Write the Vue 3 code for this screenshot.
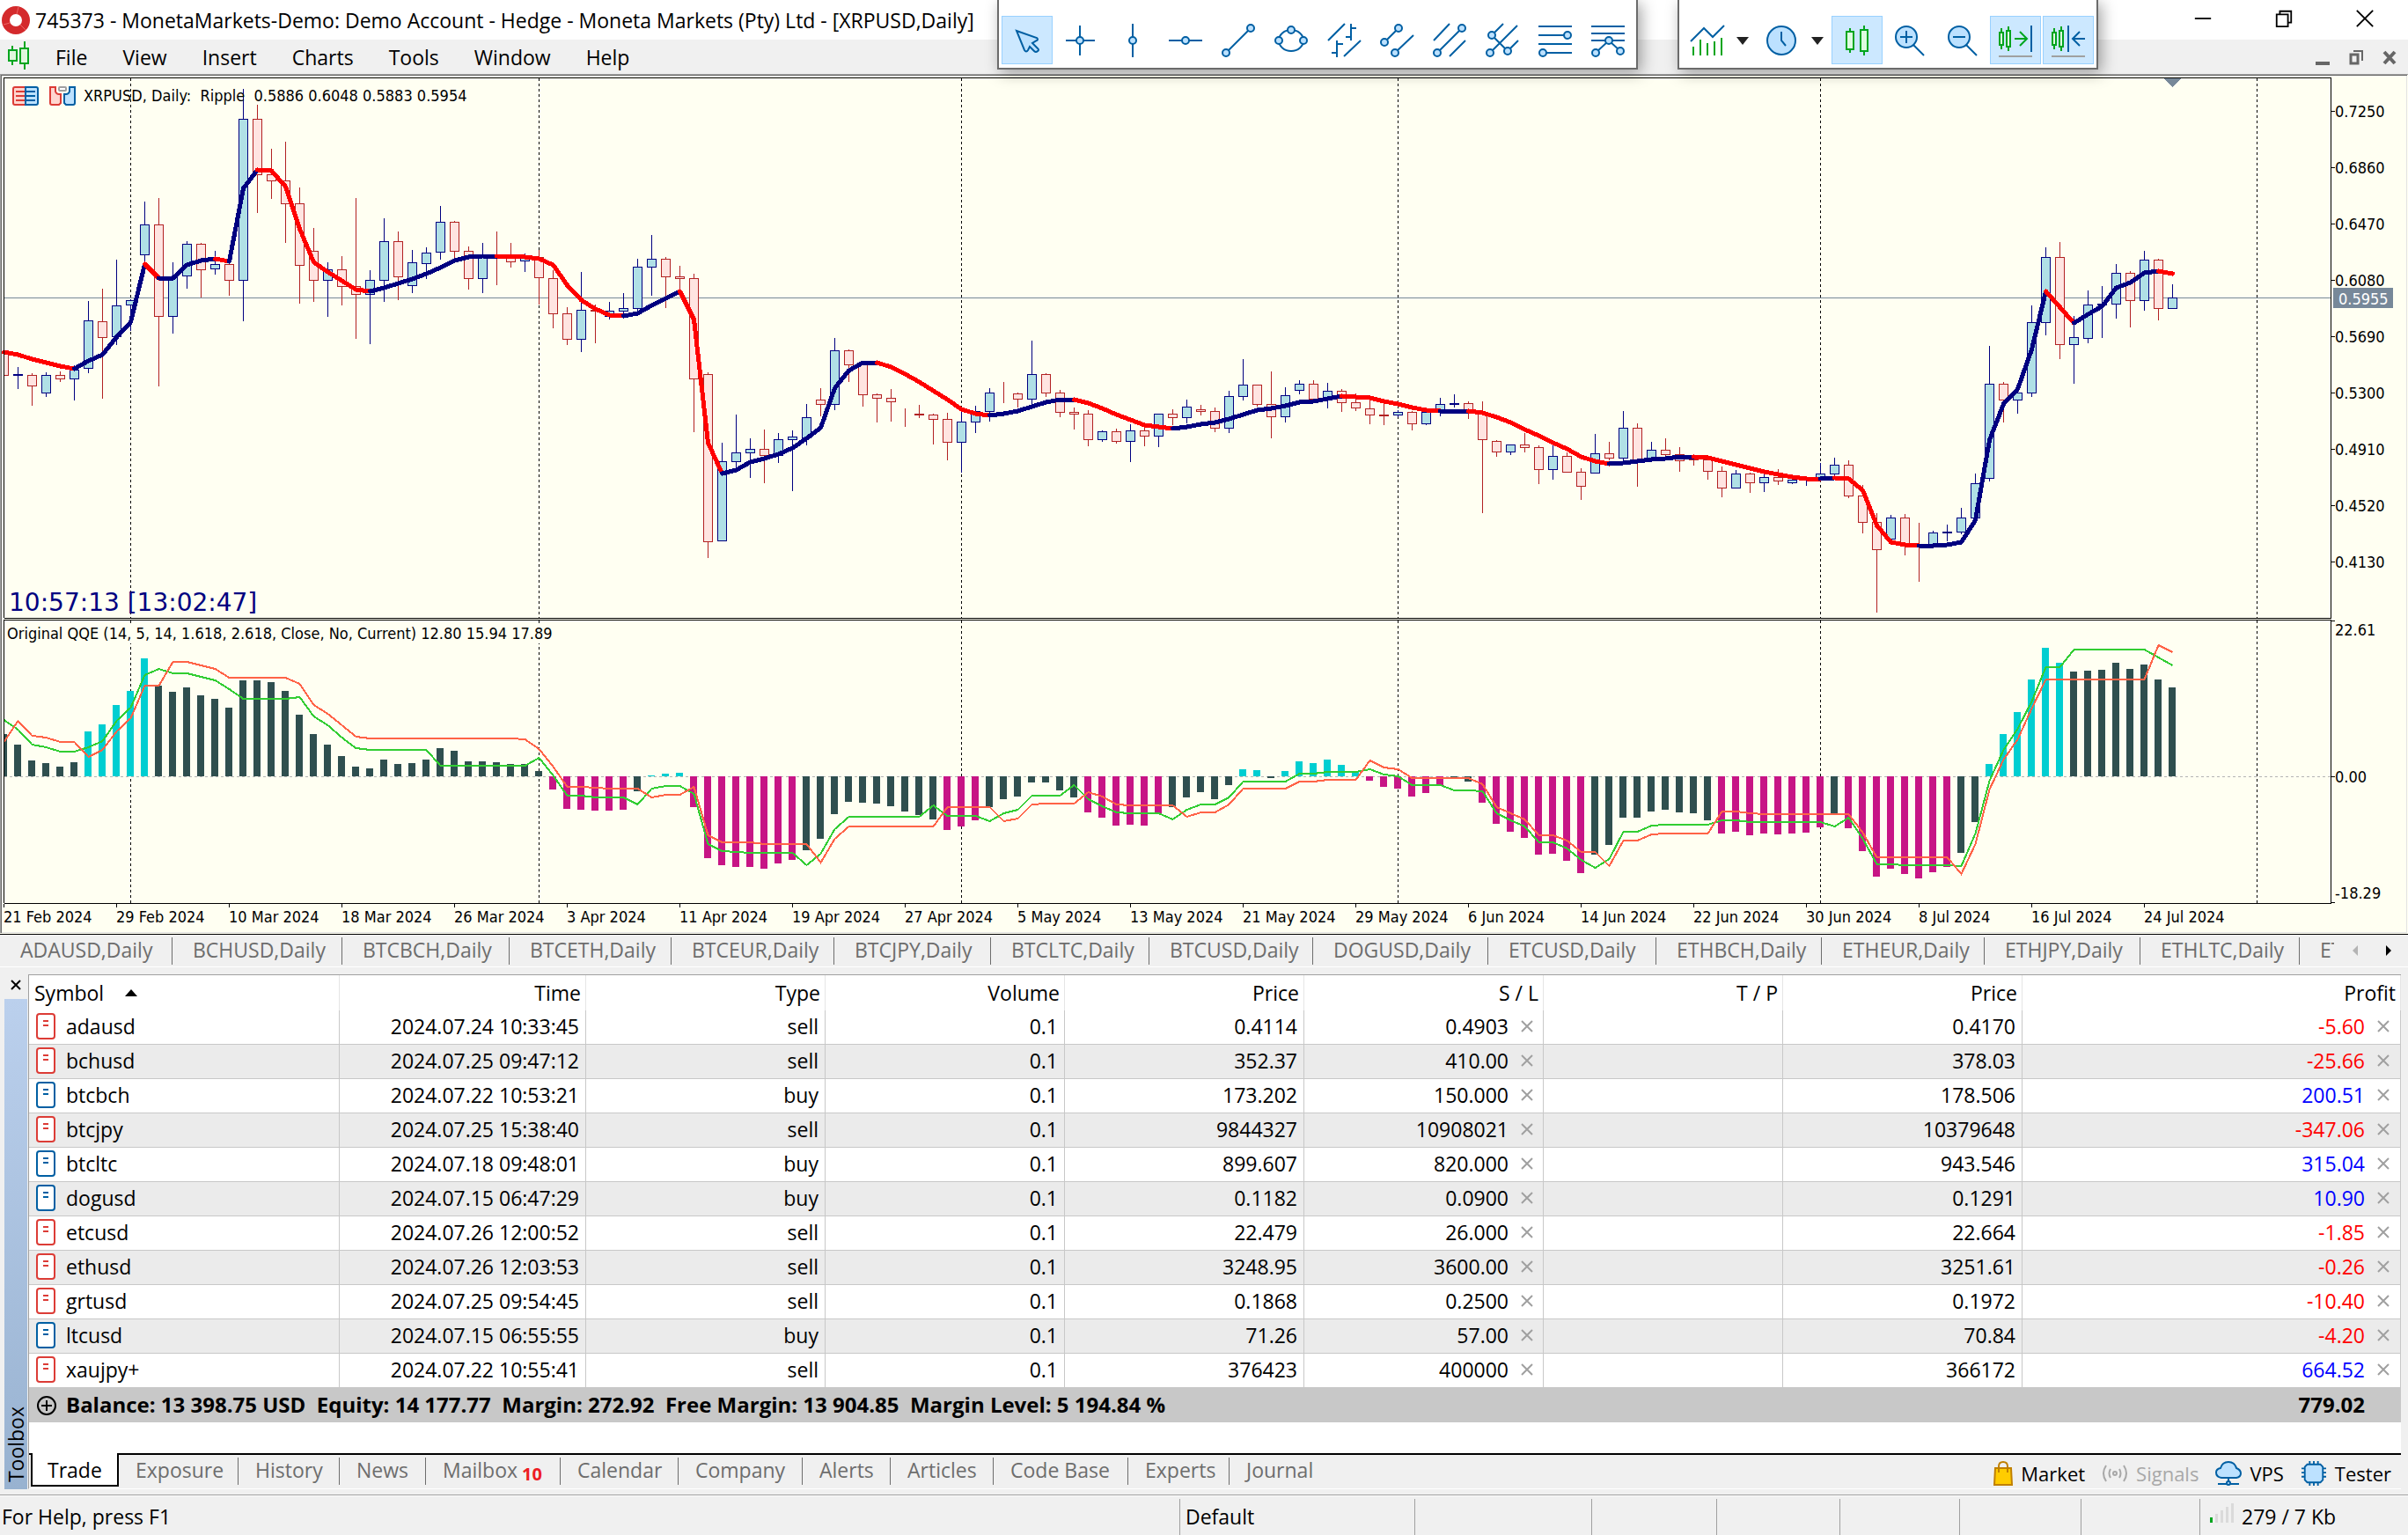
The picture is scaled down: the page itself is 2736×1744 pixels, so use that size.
<script setup>
const x = (i) => 4.5 + 16 * i

// up flag, high, body top, body bottom, low
const candles = `
0 401 401 426 427|1 417 425 426 442|0 424 426 438 461|1 423 426 446 451|0 422 426 430 434|1 415 420 430 455|1 342 364 418 424|0 328 365 383 453|1 295 347 382 392|1 340 341 346 376
1 229 255 289 300|0 225 255 359 439|1 298 315 359 379|1 274 277 313 328|0 276 277 306 338|1 285 300 305 312|0 299 300 318 336|1 101 135 318 365|0 119 135 198 242|0 169 198 205 226
0 161 205 231 276|0 213 231 301 345|0 259 285 318 343|1 298 306 318 360|0 291 306 325 347|0 225 325 334 385|1 307 318 334 391|1 248 274 318 343|0 263 274 314 341|1 284 298 324 333
1 281 287 299 317|1 234 252 286 295|0 251 252 285 293|0 280 285 316 329|1 276 291 316 333|0 263 292 293 324|0 276 292 297 304|1 288 292 296 309|0 284 292 315 346|0 307 316 356 373
0 349 356 385 392|1 309 352 385 400|0 346 352 353 390|1 343 353 359 363|1 333 350 353 356|1 294 303 350 356|1 267 294 303 336|0 292 294 314 350|0 302 314 316 330|0 311 316 430 491
0 423 425 615 634|1 503 524 614 615|1 471 514 524 536|1 498 510 514 543|0 488 510 517 549|1 492 499 517 526|1 489 496 499 558|1 459 474 497 506|0 441 454 459 473|1 384 398 459 466
0 397 398 414 434|0 413 414 448 462|0 447 448 452 480|0 442 452 456 479|0 464 470 470 485|0 460 470 471 475|0 470 471 476 505|0 469 476 502 523|1 463 479 502 537|1 461 467 479 492
1 441 446 467 479|0 434 447 447 458|0 446 447 453 463|1 387 425 453 464|0 424 425 446 451|0 443 446 468 474|0 463 468 470 488|0 466 470 499 507|1 489 490 499 502|0 487 490 501 504
1 482 489 501 525|0 486 489 495 507|1 470 470 495 508|0 465 470 474 483|1 454 462 474 481|0 460 465 467 472|0 463 467 486 491|1 444 450 486 492|1 408 437 450 455|0 437 437 459 462
0 422 459 473 498|1 440 449 473 480|1 432 436 443 448|0 432 436 453 454|1 435 444 452 464|0 442 444 457 468|0 447 457 463 467|0 455 464 471 482|0 458 471 472 483|1 466 468 471 474
0 467 468 481 489|1 467 468 481 483|1 452 459 467 473|1 448 458 459 463|0 456 458 467 476|0 456 470 499 583|0 500 501 513 519|1 505 505 513 517|0 492 505 508 514|0 506 508 533 550
1 506 518 533 545|0 514 518 536 537|0 532 536 552 568|1 493 515 537 538|0 502 515 520 523|1 467 486 520 524|0 481 486 523 553|1 502 511 520 522|0 498 511 516 519|0 508 516 523 536
0 519 520 522 529|0 521 522 535 545|0 530 535 554 565|1 534 538 554 555|0 537 538 548 560|1 539 542 548 559|0 533 542 546 551|1 544 545 548 550|1 543 544 545 552|1 526 538 544 545
1 520 528 538 541|0 523 528 563 566|0 551 563 593 606|0 583 593 624 696|1 585 588 612 616|0 584 588 618 631|0 594 618 619 661|1 603 605 619 620|1 596 604 605 615|1 577 588 604 607
1 538 549 588 590|1 393 436 543 547|0 434 436 454 480|1 445 446 454 470|1 347 366 446 451|1 281 292 366 381|0 275 292 391 408|1 359 383 391 436|1 330 346 384 390|1 325 345 346 384
1 300 310 345 362|0 308 310 341 372|1 285 295 341 353|0 294 295 350 364|1 323 338 350 351`
  .trim()
  .split(/[|\n]/)
  .map((row, i) => {
    const [up, high, top, bottom, low] = row.split(' ').map(Number)
    return { x: x(i), up: up === 1, high, top, bottom, low }
  })

const average = [
  400, 403, 408, 412, 416, 419, 410, 403, 383, 366, 300, 316, 316, 301, 296, 294, 297, 214, 193, 194,
  212, 260, 298, 309, 319, 329, 331, 327, 322, 317, 311, 304, 296, 292, 291, 291, 291, 292, 294, 301,
  324, 341, 351, 358, 359, 356, 347, 339, 331, 363, 503, 538, 534, 525, 521, 516, 509, 498, 486, 441,
  421, 412, 412, 417, 425, 434, 444, 454, 465, 470, 472, 470, 467, 462, 457, 454, 454, 458, 464, 471,
  477, 483, 485, 487, 485, 482, 480, 476, 471, 466, 464, 461, 457, 456, 453, 450, 451, 452, 456, 459,
  463, 466, 467, 467, 467, 469, 474, 480, 488, 495, 503, 510, 519, 524, 527, 526, 524, 522, 521, 519,
  519, 520, 524, 528, 532, 536, 539, 542, 544, 544, 543, 544, 557, 597, 616, 619, 620, 620, 619, 616,
  591, 500, 459, 442, 397, 331, 349, 367, 357, 348, 327, 321, 310, 308, 311,
]

const within = (i, ranges) => ranges.some(([a, b]) => i >= a && i <= b)
const rising = [[6, 10], [12, 15], [17, 18], [27, 35], [45, 48], [52, 62], [71, 76], [84, 95], [103, 104], [115, 120], [130, 130], [137, 145], [148, 153]]

const averageRuns = []
for (let i = 1; i < average.length; i++) {
  const up = within(i, rising)
  let run = averageRuns[averageRuns.length - 1]
  if (!run || run.up !== up) {
    run = { up, points: [`${x(i - 1)},${average[i - 1]}`] }
    averageRuns.push(run)
  }
  run.points.push(`${x(i)},${average[i]}`)
}

const strong = [[6, 10], [46, 48], [88, 89], [91, 96], [141, 146]]
const weak = [[39, 44], [49, 56], [67, 69], [77, 82], [97, 102], [105, 112], [122, 129], [131, 138]]
const zero = 882
const bars = [
  834, 846, 864, 867, 871, 866, 831, 823, 801, 785, 748, 779, 786, 781, 790, 794, 804, 773, 773, 775,
  785, 812, 834, 846, 859, 871, 873, 863, 868, 867, 863, 850, 853, 865, 865, 866, 868, 868, 876, 897,
  919, 920, 921, 921, 920, 899, 881, 879, 878, 917, 975, 983, 985, 985, 987, 981, 977, 966, 953, 925,
  911, 912, 913, 916, 922, 926, 931, 943, 939, 932, 917, 908, 905, 889, 889, 898, 906, 923, 929, 938,
  937, 938, 924, 917, 906, 900, 908, 892, 874, 875, 884, 876, 865, 867, 863, 869, 877, 887, 894, 896,
  905, 901, 892, 883, 888, 912, 936, 945, 952, 971, 970, 978, 992, 971, 960, 929, 929, 922, 920, 923,
  924, 932, 947, 945, 949, 947, 948, 947, 946, 940, 924, 941, 967, 996, 987, 993, 998, 991, 985, 969,
  934, 868, 834, 809, 772, 736, 753, 763, 762, 761, 753, 760, 755, 772, 781,
].map((y, i) => ({
  x: x(i),
  y: Math.min(y, zero),
  height: Math.abs(y - zero),
  tone: within(i, strong) ? 'strong' : within(i, weak) ? 'weak' : 'neutral',
}))

const fast = [
  818, 829, 846, 849, 854, 854, 849, 842, 819, 804, 767, 760, 765, 765, 769, 773, 783, 794, 794, 794,
  794, 792, 814, 824, 838, 850, 852, 852, 852, 852, 852, 870, 870, 870, 870, 870, 870, 870, 861, 881,
  904, 904, 906, 906, 906, 914, 896, 893, 893, 902, 959, 967, 968, 969, 969, 969, 969, 983, 970, 942,
  928, 928, 928, 928, 928, 928, 915, 927, 927, 927, 933, 924, 920, 904, 904, 904, 892, 908, 916, 923,
  924, 924, 924, 931, 920, 914, 914, 906, 888, 888, 888, 888, 879, 879, 877, 877, 877, 874, 880, 882,
  892, 892, 892, 898, 898, 899, 924, 932, 939, 957, 957, 964, 977, 986, 976, 945, 945, 938, 937, 937,
  937, 937, 932, 932, 934, 934, 934, 934, 934, 934, 939, 929, 953, 982, 982, 983, 983, 983, 983, 984,
  947, 887, 852, 828, 797, 758, 758, 738, 738, 738, 738, 738, 738, 747, 756,
]
const slow = [
  843, 819, 836, 838, 843, 843, 860, 852, 831, 816, 779, 779, 752, 752, 756, 760, 770, 770, 770, 770,
  770, 777, 801, 811, 824, 837, 839, 839, 839, 839, 839, 839, 839, 839, 839, 839, 839, 840, 851, 871,
  894, 894, 895, 896, 896, 896, 906, 903, 903, 894, 949, 957, 957, 957, 959, 959, 959, 959, 980, 953,
  939, 939, 939, 939, 939, 939, 939, 917, 917, 917, 917, 933, 930, 914, 913, 913, 913, 900, 905, 914,
  915, 915, 915, 915, 928, 923, 923, 914, 896, 896, 896, 896, 888, 888, 886, 886, 886, 864, 872, 874,
  884, 884, 884, 884, 884, 891, 917, 924, 931, 949, 949, 955, 968, 968, 984, 955, 955, 948, 947, 947,
  947, 947, 922, 922, 924, 925, 925, 925, 925, 925, 925, 925, 946, 974, 974, 974, 974, 974, 974, 993,
  959, 897, 863, 840, 805, 772, 772, 772, 772, 772, 772, 772, 772, 733, 741,
]
const points = (ys) => ys.map((y, i) => `${x(i)},${y}`).join(' ')

const months = [9, 38, 68, 99, 129, 160]
const prices = ['0.7250', '0.6860', '0.6470', '0.6080', '0.5690', '0.5300', '0.4910', '0.4520', '0.4130']
const dates = ['21 Feb 2024', '29 Feb 2024', '10 Mar 2024', '18 Mar 2024', '26 Mar 2024', '3 Apr 2024', '11 Apr 2024', '19 Apr 2024', '27 Apr 2024', '5 May 2024', '13 May 2024', '21 May 2024', '29 May 2024', '6 Jun 2024', '14 Jun 2024', '22 Jun 2024', '30 Jun 2024', '8 Jul 2024', '16 Jul 2024', '24 Jul 2024']

const menus = ['File', 'View', 'Insert', 'Charts', 'Tools', 'Window', 'Help']

const tools = [
  { name: 'Cursor', d: 'M17 17 L40 25 Q42 27 40 28 L35 31 L41 37 Q43 39 41 40 Q39 42 37 40 L32 35 L30 39 Q28 42 26 39 Z', filled: true, on: true },
  { name: 'Crosshair', d: 'M13 28 H46 M29 11 V45', nodes: [[29, 28]] },
  { name: 'Vertical line', d: 'M29 9 V47', nodes: [[29, 28]] },
  { name: 'Horizontal line', d: 'M10 28 H48', nodes: [[29, 28]] },
  { name: 'Trendline', d: 'M15 42 L43 14', nodes: [[15, 42], [43, 14]] },
  { name: 'Shape', d: 'M15 28 A14 12 0 1 0 43 28 A14 12 0 1 0 15 28', nodes: [[29, 16], [15, 28], [43, 28]] },
  { name: 'Cycle bars', d: 'M11 28 L30 9 M37 9 V28 M37 14 H43 M31 24 H37 M21 28 V47 M21 32 H28 M15 42 H21 M29 46 L48 28' },
  { name: 'Equidistant channel', d: 'M15 30 L31 14 M27 42 L48 22', nodes: [[15, 30], [31, 14], [27, 42]] },
  { name: 'Deviation channel', d: 'M11 28 L29 9 M15 42 L43 14 M29 46 L47 28', nodes: [[15, 42], [43, 14]] },
  { name: 'Andrews pitchfork', d: 'M17 22 L35 40 M17 22 L30 9 M15 42 L46 11 M35 40 L47 28', nodes: [[17, 22], [15, 42], [35, 40]] },
  { name: 'Fibonacci retracement', d: 'M10 12 H48 M10 22 H43 M10 32 H48 M15 42 H48', nodes: [[43, 22], [15, 42]] },
  { name: 'Fibonacci expansion', d: 'M10 12 H48 M10 20 H48 M10 28 H48 M15 42 L30 28 L43 40', nodes: [[30, 28], [15, 42], [43, 40]] },
]

const chartTabs = ['ADAUSD', 'BCHUSD', 'BTCBCH', 'BTCETH', 'BTCEUR', 'BTCJPY', 'BTCLTC', 'BTCUSD', 'DOGUSD', 'ETCUSD', 'ETHBCH', 'ETHEUR', 'ETHJPY', 'ETHLTC', 'ETHUSD']

const trades = [
  ['adausd', '2024.07.24 10:33:45', 'sell', '0.1', '0.4114', '0.4903', '0.4170', '-5.60'],
  ['bchusd', '2024.07.25 09:47:12', 'sell', '0.1', '352.37', '410.00', '378.03', '-25.66'],
  ['btcbch', '2024.07.22 10:53:21', 'buy', '0.1', '173.202', '150.000', '178.506', '200.51'],
  ['btcjpy', '2024.07.25 15:38:40', 'sell', '0.1', '9844327', '10908021', '10379648', '-347.06'],
  ['btcltc', '2024.07.18 09:48:01', 'buy', '0.1', '899.607', '820.000', '943.546', '315.04'],
  ['dogusd', '2024.07.15 06:47:29', 'buy', '0.1', '0.1182', '0.0900', '0.1291', '10.90'],
  ['etcusd', '2024.07.26 12:00:52', 'sell', '0.1', '22.479', '26.000', '22.664', '-1.85'],
  ['ethusd', '2024.07.26 12:03:53', 'sell', '0.1', '3248.95', '3600.00', '3251.61', '-0.26'],
  ['grtusd', '2024.07.25 09:54:45', 'sell', '0.1', '0.1868', '0.2500', '0.1972', '-10.40'],
  ['ltcusd', '2024.07.15 06:55:55', 'buy', '0.1', '71.26', '57.00', '70.84', '-4.20'],
  ['xaujpy+', '2024.07.22 10:55:41', 'sell', '0.1', '376423', '400000', '366172', '664.52'],
].map(([symbol, time, type, volume, open, stop, price, profit]) => ({ symbol, time, type, volume, open, stop, price, profit }))

const panels = ['Trade', 'Exposure', 'History', 'News', 'Mailbox', 'Calendar', 'Company', 'Alerts', 'Articles', 'Code Base', 'Experts', 'Journal']
</script>

<template>
  <div class="terminal">
    <header class="titlebar">
      <svg class="logo" viewBox="0 0 32 32" aria-hidden="true">
        <circle cx="16" cy="16" r="11.500" fill="#fff" stroke="#d42a2c" stroke-width="9" />
        <path d="M19 1 L17 9 M2 21 L9 19 M27 27 L21 21" stroke="#e66" stroke-width="1" />
      </svg>
      <h1>745373 - MonetaMarkets-Demo: Demo Account - Hedge - Moneta Markets (Pty) Ltd - [XRPUSD,Daily]</h1>
      <div class="window-controls">
        <button aria-label="Minimize"><svg viewBox="0 0 24 24"><path d="M2 12 H22" /></svg></button>
        <button aria-label="Restore"><svg viewBox="0 0 24 24"><path d="M3 7 H17 V22 H3 Z M7 7 V3 H21 V17 H17" /></svg></button>
        <button aria-label="Close"><svg viewBox="0 0 24 24"><path d="M2 2 L22 22 M22 2 L2 22" /></svg></button>
      </div>
    </header>

    <nav class="menubar">
      <svg class="candle-icon" viewBox="0 0 28 32" fill="#dff7dc" stroke="#00a51e" stroke-width="2" aria-hidden="true">
        <path d="M7 5 V27 M21 0 V32" /><path d="M3 10 H12 V22 H3 Z M16 8 H25 V25 H16 Z" />
      </svg>
      <button v-for="m in menus" :key="m">{{ m }}</button>
      <div class="child-controls">
        <button aria-label="Minimize chart"><svg viewBox="0 0 20 20"><path d="M2 17 H18" stroke-width="4" /></svg></button>
        <button aria-label="Restore chart"><svg viewBox="0 0 20 20"><path d="M4 7 H12 V17 H4 Z" stroke-width="3" /><path d="M7 3 H17 V14" stroke-width="2" /></svg></button>
        <button aria-label="Close chart"><svg viewBox="0 0 20 20"><path d="M4 4 L16 17 M16 4 L4 17" stroke-width="4" /></svg></button>
      </div>
    </nav>

    <div class="toolbar drawing" role="toolbar" aria-label="Drawing tools">
      <button v-for="t in tools" :key="t.name" :class="{ on: t.on }" :aria-label="t.name">
        <svg viewBox="0 0 58 55" class="blue">
          <path :d="t.d" :class="{ tint: t.filled }" />
          <circle v-for="(n, i) in t.nodes" :key="i" :cx="n[0]" :cy="n[1]" r="4" class="tint" />
        </svg>
      </button>
    </div>

    <div class="toolbar view" role="toolbar" aria-label="Chart view">
      <button aria-label="Indicators">
        <svg viewBox="0 0 58 55" class="blue"><path d="M10 29 L25 14 L35 24 L48 11" /><path class="green" d="M13 35 V45 M21 27 V45 M29 31 V45 M37 29 V45 M45 25 V45" /></svg>
      </button>
      <button class="drop" aria-label="Indicator list"><svg viewBox="0 0 23 55"><path d="M2 24 H16 L9 33 Z" fill="#222" /></svg></button>
      <button aria-label="Timeframe">
        <svg viewBox="0 0 58 55" class="blue"><circle class="tint" cx="28" cy="28" r="16" /><path d="M28 18 V28 L33 34" /></svg>
      </button>
      <button class="drop" aria-label="Timeframe list"><svg viewBox="0 0 23 55"><path d="M2 24 H16 L9 33 Z" fill="#222" /></svg></button>
      <button class="on" aria-label="Candlesticks">
        <svg viewBox="0 0 58 55" class="green"><path d="M21 14 V42 M37 11 V45" /><path class="mint" d="M17 18 H25 V38 H17 Z M33 16 H41 V40 H33 Z" /></svg>
      </button>
      <button aria-label="Zoom in">
        <svg viewBox="0 0 58 55" class="blue"><path d="M33 33 L45 45" /><circle class="tint" cx="25" cy="24" r="12" /><path d="M18 24 H32 M25 17 V31" /></svg>
      </button>
      <button aria-label="Zoom out">
        <svg viewBox="0 0 58 55" class="blue"><path d="M33 33 L45 45" /><circle class="tint" cx="25" cy="24" r="12" /><path d="M18 24 H32" /></svg>
      </button>
      <button class="on" aria-label="Auto scroll">
        <svg viewBox="0 0 58 55" class="green">
          <path d="M13 14 V38 M21 12 V40" /><path class="mint" d="M11 19 H15 V33 H11 Z M19 17 H23 V35 H19 Z" /><path d="M28 26 H41 M34 18 L42 26 L34 34" />
          <path class="blue" d="M47 11 V41" /><path class="rule" d="M10 46 H48" />
        </svg>
      </button>
      <button class="on" aria-label="Chart shift">
        <svg viewBox="0 0 58 55" class="green">
          <path d="M13 14 V38 M21 12 V40" /><path class="mint" d="M11 19 H15 V33 H11 Z M19 17 H23 V35 H19 Z" />
          <path class="blue" d="M29 11 V41 M48 26 H35 M42 18 L34 26 L42 34" /><path class="rule" d="M10 46 H48" />
        </svg>
      </button>
    </div>

    <svg class="chart" viewBox="0 84 2736 977" role="img" aria-label="XRPUSD daily chart with QQE indicator">
      <g shape-rendering="crispEdges">
        <path d="M0 84.500 H2736 M.5 84 V1060" stroke="#a0a0a0" />
        <path d="M1 85.500 H2735 M1.500 85 V1060" stroke="#696969" />
        <path d="M2 1059.500 H2735 M2734.500 86 V1060" stroke="#e3e3e3" />
        <path v-for="m in months" :key="m" :d="`M${x(m)} 89 V702 M${x(m)} 705 V1026`" class="month" />
        <path d="M5 338.500 H2648" stroke="#778899" />
        <path :d="`M5 ${zero}.5 H2648`" stroke="#b4b4b4" stroke-dasharray="3 3" />

        <g v-for="c in candles" :key="c.x" :class="c.up ? 'up' : 'down'">
          <path :d="`M${c.x} ${c.high} V${c.low}`" />
          <rect :x="Math.max(c.x - 5, 4.5)" :y="c.top + 0.5" :width="c.x < 5 ? 5 : 10" :height="c.bottom - c.top" />
        </g>
        <polyline v-for="(r, i) in averageRuns" :key="i" :points="r.points.join(' ')" class="average" :stroke="r.up ? '#000080' : '#ff0000'" />

        <rect v-for="b in bars" :key="b.x" :x="Math.max(b.x - 4.5, 5)" :y="b.y" :width="b.x < 5 ? 3 : 8" :height="b.height" :class="b.tone" />
        <polyline :points="points(fast)" class="signal" stroke="#32cd32" />
        <polyline :points="points(slow)" class="signal" stroke="#ff6347" />

        <path d="M4.500 1026 V704.500 H2648.500 V1026.500 H4.500 M4.500 702 V88.500 H2648.500 V702.500 H4.500" class="frame" />
        <path v-for="(p, i) in prices" :key="p" :d="`M2649 ${126.5 + 64 * i} H2653`" class="frame" />
        <path d="M2649 705.500 H2653 M2649 882.500 H2653 M2649 1025.500 H2653" class="frame" />
        <path v-for="(d, i) in dates" :key="d" :d="`M${x(8 * i)} 1027 V1031`" class="frame" />
        <path d="M2459 89 H2478 L2468.500 99 Z" fill="#778899" />
        <rect x="7" y="709" width="630" height="22" fill="#fffff2" />
        <rect x="2651" y="327" width="68" height="23" fill="#778899" />
      </g>

      <g stroke-width="2">
        <path d="M29 99 H17 Q15 99 15 101 V117 Q15 119 17 119 H29 Z" fill="#ffd6cf" stroke="#dc3c36" />
        <path d="M29 99 H41 Q43 99 43 101 V117 Q43 119 41 119 H29 Z" fill="#bce1ff" stroke="#005fa3" />
        <path d="M18 104 H28 M18 109 H28 M18 114 H28" stroke="#dc3c36" />
        <path d="M30 104 H40 M30 109 H40 M30 114 H40" stroke="#005fa3" />
      </g>
      <g stroke-width="2">
        <path d="M57 99 H63 V104 Q64 107 67 107 H69 V117 L67 119 H59 Q57 119 57 117 Z" fill="#ffd6cf" stroke="#dc3c36" />
        <path d="M85 99 H79 V104 Q78 107 75 107 H73 V117 L75 119 H83 Q85 119 85 117 Z" fill="#bce1ff" stroke="#005fa3" />
        <rect x="67" y="99" width="8" height="4" rx="1" fill="#fff" stroke="#a0a0a0" />
      </g>

      <g class="labels">
        <text x="95" y="115">XRPUSD, Daily:&nbsp; Ripple&nbsp; 0.5886 0.6048 0.5883 0.5954</text>
        <text x="8" y="726">Original QQE (14, 5, 14, 1.618, 2.618, Close, No, Current) 12.80 15.94 17.89</text>
        <text v-for="(p, i) in prices" :key="p" x="2653" :y="133 + 64 * i">{{ p }}</text>
        <text x="2657" y="346" fill="#fff">0.5955</text>
        <text x="2653" y="722">22.61</text>
        <text x="2653" y="889">0.00</text>
        <text x="2653" y="1021">-18.29</text>
        <text v-for="(d, i) in dates" :key="d" :x="4 + 128 * i" y="1048">{{ d }}</text>
      </g>
      <text x="10" y="694" class="clock">10:57:13 [13:02:47]</text>
    </svg>

    <nav class="chart-tabs">
      <a v-for="t in chartTabs" :key="t" href="#">{{ t }},Daily</a>
      <span class="scroll">
        <button aria-label="Scroll left" disabled><svg viewBox="0 0 10 14"><path d="M8 1 L2 7 L8 13 Z" fill="#b4b4b4" /></svg></button>
        <button aria-label="Scroll right"><svg viewBox="0 0 10 14"><path d="M2 1 L8 7 L2 13 Z" fill="#000" /></svg></button>
      </span>
    </nav>

    <section class="toolbox">
      <aside class="grip">
        <button aria-label="Close toolbox"><svg viewBox="0 0 12 12"><path d="M1 1 L11 11 M11 1 L1 11" stroke="#000" stroke-width="2" /></svg></button>
        <div class="caption"><span>Toolbox</span></div>
      </aside>
      <div class="panel">
        <table>
          <colgroup><col class="c-symbol" /><col class="c-time" /><col v-for="n in 6" :key="n" class="c-value" /><col /></colgroup>
          <thead>
            <tr>
              <th class="symbol">Symbol <svg viewBox="0 0 14 8"><path d="M0 8 L7 0 L14 8 Z" /></svg></th>
              <th>Time</th><th>Type</th><th>Volume</th><th>Price</th><th>S / L</th><th>T / P</th><th>Price</th><th>Profit</th>
            </tr>
          </thead>
          <tbody>
            <tr v-for="t in trades" :key="t.symbol">
              <td class="symbol">
                <svg class="order" :class="t.type" viewBox="0 0 22 30" aria-hidden="true"><rect x="1" y="1" width="20" height="28" rx="3" /><path d="M8 9 H14 M8 14 H14" /></svg>{{ t.symbol }}
              </td>
              <td>{{ t.time }}</td>
              <td>{{ t.type }}</td>
              <td>{{ t.volume }}</td>
              <td>{{ t.open }}</td>
              <td class="closable">{{ t.stop }}<button aria-label="Remove stop loss"><svg viewBox="0 0 14 14"><path d="M1 1 L13 13 M13 1 L1 13" /></svg></button></td>
              <td></td>
              <td>{{ t.price }}</td>
              <td class="closable" :class="t.profit.startsWith('-') ? 'loss' : 'gain'">{{ t.profit }}<button aria-label="Close position"><svg viewBox="0 0 14 14"><path d="M1 1 L13 13 M13 1 L1 13" /></svg></button></td>
            </tr>
          </tbody>
          <tfoot>
            <tr>
              <td colspan="8" class="symbol">
                <svg class="plus" viewBox="0 0 24 24" aria-hidden="true"><circle cx="12" cy="12" r="10" /><path d="M12 6 V18 M6 12 H18" /></svg><span>Balance: 13 398.75 USD&nbsp; Equity: 14 177.77&nbsp; Margin: 272.92&nbsp; Free Margin: 13 904.85&nbsp; Margin Level: 5 194.84 %</span>
              </td>
              <td class="total">779.02</td>
            </tr>
          </tfoot>
        </table>
        <div class="panel-tabs">
          <nav>
            <a v-for="p in panels" :key="p" href="#" :class="{ active: p === 'Trade' }">{{ p }}<b v-if="p === 'Mailbox'">10</b></a>
          </nav>
          <div class="services">
            <button>
              <svg viewBox="0 0 22 28"><path d="M2 8 H20 L21 27 H1 Z" fill="#ffcc00" stroke="#c08000" stroke-width="2" /><path d="M6 13 V6 Q6 1 11 1 Q16 1 16 6 V13" fill="none" stroke="#c08000" stroke-width="2" /></svg>Market
            </button>
            <button disabled>
              <svg viewBox="0 0 30 28" class="wide" fill="none" stroke="#a8a8a8" stroke-width="2"><circle cx="15" cy="14" r="2" /><path d="M10 9 Q7 14 10 19 M5 5 Q-1 14 5 23 M20 9 Q23 14 20 19 M25 5 Q31 14 25 23" /></svg>Signals
            </button>
            <button>
              <svg viewBox="0 0 30 28" class="wide" stroke="#005fa3" stroke-width="2"><path d="M7 19 Q1 18 1 13 Q1 9 6 8 Q8 1 15 1 Q22 1 24 8 Q29 10 29 14 Q29 18 24 19 Z" fill="#bce1ff" /><path d="M15 19 V26 M3 26 H27" fill="none" /><circle cx="15" cy="25" r="2" fill="#bce1ff" /></svg>VPS
            </button>
            <button>
              <svg viewBox="0 0 30 30" class="wide" stroke="#005fa3" stroke-width="2"><path d="M10 0 V30 M15 0 V30 M20 0 V30 M0 9 H30 M0 14 H30 M0 19 H30" /><path d="M7 4 H23 L26 7 V23 L23 26 H7 L4 23 V7 Z" fill="#bce1ff" /></svg>Tester
            </button>
          </div>
        </div>
      </div>
    </section>

    <footer class="statusbar">
      <span>For Help, press F1</span>
      <span>Default</span>
      <span v-for="n in 6" :key="n"></span>
      <span class="traffic">
        <svg viewBox="0 0 28 22"><path d="M1 16 h3 v6 h-3 Z" fill="#00a51e" /><path d="M7 12 h3 v10 h-3 Z M13 8 h3 v14 h-3 Z M19 4 h3 v18 h-3 Z M25 0 h3 v22 h-3 Z" fill="#dadada" /></svg>279 / 7 Kb
      </span>
    </footer>
  </div>
</template>

<style>
body {
  margin: 0;
  background: #f0f0f0;
}
</style>

<style scoped>
.terminal {
  position: relative;
  display: flex;
  flex-direction: column;
  min-height: 100vh;
  overflow: hidden;
  background: #f0f0f0;
  color: #000;
  font: 23px/30px "Open Sans", "Noto Sans", sans-serif;
}
.terminal * {
  box-sizing: border-box;
}
button {
  padding: 0;
  border: 0;
  background: none;
  color: inherit;
  font: inherit;
}
button svg {
  display: block;
}
a {
  color: #6d6d6d;
  text-decoration: none;
}

.titlebar {
  display: flex;
  align-items: center;
  height: 45px;
  padding: 0 3px 0 2px;
  background: #fff;
}
.logo {
  flex: none;
  width: 32px;
  height: 32px;
  margin-right: 6px;
}
h1 {
  flex: 1;
  margin: 0;
  font-size: 23px;
  font-weight: 400;
  white-space: nowrap;
}
.window-controls {
  display: flex;
}
.window-controls button {
  display: grid;
  place-items: center;
  width: 92px;
  height: 45px;
  padding-bottom: 3px;
}
.window-controls svg {
  width: 22px;
  height: 22px;
  fill: none;
  stroke: #000;
  stroke-width: 2;
}

.menubar {
  display: flex;
  align-items: center;
  height: 39px;
}
.candle-icon {
  width: 28px;
  height: 32px;
  margin: 0 8px 4px 7px;
}
.menubar > button {
  padding: 0 20px;
}
.child-controls {
  display: flex;
  gap: 18px;
  margin-left: auto;
  padding-right: 11px;
}
.child-controls svg {
  width: 20px;
  height: 20px;
  fill: none;
  stroke: #666;
}

.toolbar {
  position: absolute;
  top: 0;
  display: flex;
  padding: 18px 2px 4px;
  border: solid #6b6b6b;
  border-width: 0 2px 2px;
  background: #fff;
  box-shadow: 4px 4px 16px rgba(0, 0, 0, 0.35);
}
.drawing {
  left: 1133px;
}
.view {
  left: 1906px;
}
.toolbar button {
  width: 58px;
  height: 55px;
  margin: 0 1px;
}
.toolbar .drop {
  width: 23px;
}
.toolbar svg {
  width: 100%;
  height: 100%;
}
.toolbar .on {
  outline: 1px solid #99d1ff;
  outline-offset: -1px;
  background: #cce8ff;
}
.blue,
.green {
  fill: none;
  stroke: #005fa3;
  stroke-width: 2;
}
.green {
  stroke: #00a51e;
}
.tint {
  fill: #bce1ff;
}
.mint {
  fill: #dffbe0;
}
.rule {
  stroke: #a0a0a0;
}

.chart {
  display: block;
  width: 100%;
  height: auto;
  background: #fffff2;
}
.month {
  stroke: #000;
  stroke-dasharray: 3 3;
}
.up {
  fill: #b0e0e6;
  stroke: #000080;
}
.down {
  fill: #ffe4e1;
  stroke: #b22222;
}
.average {
  fill: none;
  stroke-width: 5;
  stroke-linecap: round;
  stroke-linejoin: round;
}
.strong {
  fill: #00ced1;
}
.weak {
  fill: #c71585;
}
.neutral {
  fill: #2f4f4f;
}
.signal {
  fill: none;
  stroke-width: 2;
}
.frame {
  fill: none;
  stroke: #000;
}
.labels {
  font: 18px "DejaVu Sans Condensed", "DejaVu Sans", sans-serif;
}
.clock {
  fill: #000080;
  font: 28px "DejaVu Sans", sans-serif;
}

.chart-tabs {
  display: grid;
  grid-template-columns: 196px 193px 190px 184px 185px 178px 180px 186px 199px 191px 188px 185px 177px 181px minmax(0, 39px) 1fr;
  align-items: center;
  height: 38px;
  border-top: 1px solid #000;
  border-bottom: 1px solid #fff;
}
.chart-tabs a {
  height: 31px;
  padding-left: 23px;
  border-right: 1px solid #6d6d6d;
  line-height: 28px;
  white-space: nowrap;
}
.chart-tabs a:nth-of-type(15) {
  overflow: hidden;
  border: 0;
}
.scroll {
  display: flex;
  justify-content: space-between;
  padding: 0 17px 0 19px;
}
.scroll svg {
  width: 10px;
  height: 14px;
}

.toolbox {
  display: flex;
  flex: 1;
  padding: 8px 8px 6px 0;
}
.grip {
  display: flex;
  flex-direction: column;
  align-items: center;
  width: 32px;
  padding-left: 3px;
}
.grip button {
  padding: 6px;
}
.grip button svg {
  width: 12px;
  height: 12px;
}
.caption {
  display: flex;
  flex: 1;
  align-items: flex-end;
  width: 26px;
  margin-top: 4px;
  padding-bottom: 8px;
  background: linear-gradient(#bbd0ed, #98b2d0);
}
.caption span {
  width: 26px;
  line-height: 26px;
  writing-mode: vertical-rl;
  transform: rotate(180deg);
}
.panel {
  display: flex;
  flex: 1;
  flex-direction: column;
  min-width: 0;
  border: solid #a0a0a0;
  border-width: 1px 0 0 1px;
  border-bottom: 1px solid #fff;
  background: #fff;
}

table {
  width: 100%;
  table-layout: fixed;
  border-collapse: separate;
  border-spacing: 0;
}
.c-symbol {
  width: 353px;
}
.c-time {
  width: 280px;
}
.c-value {
  width: 272px;
}
th,
td {
  height: 39px;
  padding: 0 7px 2px 0;
  border-right: 1px solid #c8c8c8;
  font-weight: 400;
  line-height: 30px;
  text-align: right;
  white-space: nowrap;
}
th {
  height: 40px;
  padding: 0 5px 0 0;
  border-right-color: #e5e5e5;
}
tbody td {
  border-bottom: 1px solid #c8c8c8;
}
tbody tr:nth-child(even) {
  background: #ebebeb;
}
.symbol {
  padding-left: 6px;
  text-align: left;
}
td.symbol {
  padding-left: 8px;
}
th svg {
  width: 14px;
  height: 8px;
  margin-left: 18px;
  vertical-align: 5px;
}
.order {
  width: 22px;
  height: 30px;
  margin-right: 12px;
  fill: #fff;
  stroke-width: 2;
  vertical-align: -6px;
}
.sell {
  stroke: #dc3c36;
}
.buy {
  stroke: #005fa3;
}
td.closable {
  padding-right: 11px;
}
td.closable:last-child {
  padding-right: 12px;
}
.closable button {
  margin-left: 14px;
  vertical-align: 2px;
}
.closable svg {
  width: 14px;
  height: 14px;
  fill: none;
  stroke: #a0a0a0;
  stroke-width: 2;
}
.loss {
  color: #f00;
}
.gain {
  color: #00f;
}
tfoot td {
  border: 0;
  background: #c8c8c8;
  font-size: 24px;
  font-weight: 700;
}
td.total {
  padding-right: 41px;
}
.plus {
  width: 24px;
  height: 24px;
  margin-right: 10px;
  fill: none;
  stroke: #000;
  stroke-width: 2;
  vertical-align: -4px;
}

.panel-tabs {
  display: flex;
  justify-content: space-between;
  height: 40px;
  margin-top: auto;
  border-top: 2px solid #000;
  background: #f0f0f0;
}
.panel-tabs nav {
  display: grid;
  grid-template-columns: 102px 136px 115px 98px 153px 134px 141px 100px 117px 153px 115px 130px;
  margin-top: -2px;
}
.panel-tabs a {
  height: 31px;
  margin-top: 5px;
  padding-left: 19px;
  border-right: 1px solid #6d6d6d;
  line-height: 28px;
  white-space: nowrap;
}
.panel-tabs a:last-child {
  border: 0;
}
.panel-tabs .active {
  height: 38px;
  margin: 0 0 0 2px;
  padding: 5px 0 0 17px;
  border: solid #000;
  border-width: 0 2px 2px;
  background: #fff;
  color: #000;
}
.panel-tabs b {
  position: relative;
  top: 3px;
  margin-left: 5px;
  color: #ed1c24;
  font-size: 20px;
}
.services {
  display: flex;
  align-items: center;
  gap: 19px;
  padding: 4px 11px 0 0;
  font-size: 22px;
}
.services button {
  display: flex;
  gap: 9px;
  align-items: center;
}
.services svg {
  width: 22px;
  height: 28px;
}
.services .wide {
  width: 30px;
}
.services button:disabled {
  color: #a8a8a8;
}

.statusbar {
  display: grid;
  grid-template-columns: 1340fr 267fr 201fr 142fr 140fr 136fr 138fr 135fr 237fr;
  height: 46px;
  padding-top: 4px;
  border-top: 1px solid #a0a0a0;
  box-shadow: inset 0 1px #fff;
}
.statusbar span {
  padding: 5px 0 0 6px;
  border-left: 1px solid #a0a0a0;
}
.statusbar span:first-child {
  padding-left: 2px;
  border: 0;
}
.statusbar .traffic {
  display: flex;
  gap: 9px;
  padding-left: 10px;
}
.traffic svg {
  width: 28px;
  height: 22px;
}
</style>
